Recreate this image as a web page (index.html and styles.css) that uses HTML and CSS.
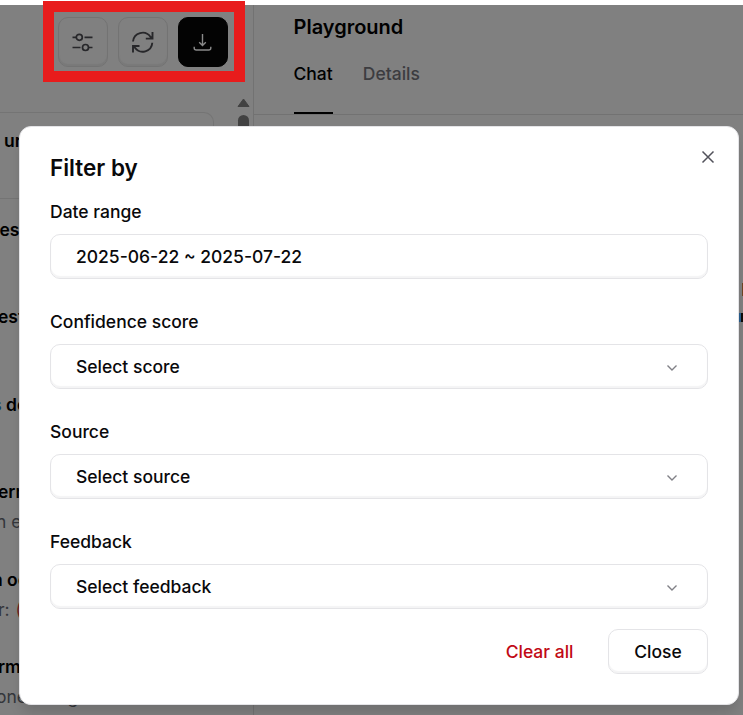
FILE: index.html
```html
<!DOCTYPE html>
<html lang="en">
<head>
<meta charset="utf-8">
<title>Playground</title>
<link rel="stylesheet" href="styles.css">
</head>
<body>
<div class="app">
  <aside class="sidebar">
    <div class="toolbar">
      <button class="tool" aria-label="Filter"><svg width="22" height="22" viewBox="0 0 22 22"><path d="M.5 6.300h3.800M12.500 6.300h8M.5 16.500h8M16.500 16.500h4"/><circle cx="7.300" cy="6.300" r="3"/><circle cx="13.500" cy="16.500" r="3"/></svg></button>
      <button class="tool" aria-label="Refresh"><svg class="refresh" width="22" height="22" viewBox="0 0 22 22"><path d="M1 10.500a9.600 9.600 0 0 1 17.400-4.700L20.300 7.500M20.500 1v6.600h-6.700M20.300 11.800A9.600 9.600 0 0 1 3 16.800L1.200 15M1 21.500V15h6.500"/></svg></button>
      <button class="tool tool-dark" aria-label="Download"><svg width="20" height="20" viewBox="0 0 20 20"><path d="M9.500 2v11.500M6.200 10.300l3.300 3.300 3.300-3.300M1.200 14.800v1.200a2 2 0 0 0 2 2h12.600a2 2 0 0 0 2-2v-1.200"/></svg></button>
    </div>
    <div class="list-area">
      <div class="list">
        <div class="row selected"><b class="first">ur</b></div>
        <div class="row"><b class="in">est</b></div>
        <div class="row"><b>est</b></div>
        <div class="row"><b class="out"><span class="link">s</span> do</b></div>
        <div class="row"><b>ern</b><span class="nudge">n e</span></div>
        <div class="row"><b class="out">n oc</b><span>r: <i class="mark">(</i></span></div>
        <div class="row"><b>rms</b><span class="nudge">one  thing</span></div>
      </div>
      <div class="scrollbar"><svg width="13" height="11" viewBox="0 0 13 11"><path d="M6.500 2 12 9.500H1z"/></svg><div class="thumb"></div></div>
    </div>
  </aside>
  <main class="main">
    <h1>Playground</h1>
    <nav class="tabs"><a class="active">Chat</a><a>Details</a></nav>
    <div class="canvas"><div class="chip chip-orange"></div><div class="chip chip-blue"></div></div>
  </main>
</div>
<div class="highlight"></div>
<section class="modal">
  <button class="dismiss" aria-label="Dismiss"><svg width="14" height="14" viewBox="0 0 14 14"><path d="M1.500 1.500l11 11M12.500 1.500l-11 11"/></svg></button>
  <h2>Filter by</h2>
  <div class="field"><label>Date range</label><div class="control">2025-06-22 ~ 2025-07-22</div></div>
  <div class="field"><label>Confidence score</label><div class="control">Select score<svg width="12" height="8" viewBox="0 0 12 8"><path d="M1.500 1.500 6 6l4.500-4.500"/></svg></div></div>
  <div class="field"><label>Source</label><div class="control">Select source<svg width="12" height="8" viewBox="0 0 12 8"><path d="M1.500 1.500 6 6l4.500-4.500"/></svg></div></div>
  <div class="field"><label>Feedback</label><div class="control">Select feedback<svg width="12" height="8" viewBox="0 0 12 8"><path d="M1.500 1.500 6 6l4.500-4.500"/></svg></div></div>
  <div class="actions"><button class="clear">Clear all</button><button class="close">Close</button></div>
</section>
</body>
</html>
```
FILE: styles.css
```css
* { box-sizing: border-box; }
body {
  margin: 0;
  padding-top: 5px;
  height: 715px;
  overflow: hidden;
  background: #fff;
  color: #09090b;
  font: 500 17.5px/25px Inter, sans-serif;
}
button { font: inherit; padding: 0; background: none; border: 0; }
svg { fill: none; stroke: currentColor; display: block; }
h1, h2 { margin: 0; font-weight: 600; }

.app { display: flex; height: 710px; background: #808080; color: #000; }
.sidebar { width: 254px; flex: none; border-right: 1px solid #727272; display: flex; flex-direction: column; }
.toolbar { display: flex; justify-content: flex-end; gap: 10px; padding: 12px 25px 0 0; height: 92px; }
.tool {
  width: 50px;
  height: 50px;
  display: flex;
  align-items: center;
  justify-content: center;
  border: 1px solid #737373;
  border-radius: 10px;
  box-shadow: inset 0 -2px 1px #797979;
  color: #27272a;
}
.tool svg { stroke-width: 1.7; }
.tool .refresh { stroke-width: 1.9; }
.tool-dark { background: #030303; border-color: #030303; box-shadow: none; color: #8a8a8a; }
.tool-dark svg { stroke-width: 1.4; }

.list-area { display: flex; flex: 1; overflow: hidden; }
.list { width: 214px; margin-top: 15px; }
.row { height: 87.5px; padding-top: 18px; display: flex; flex-direction: column; gap: 5px; margin-left: -2px; white-space: pre; }
.row b { font-weight: 600; }
.row > span { font-weight: 400; color: #34363b; }
.row .first { padding-left: 6px; }
.row .in { margin-left: 1.5px; }
.row .out { margin-left: -6px; }
.row .nudge { margin-left: -2px; }
.selected { height: 86.500px; padding-top: 15px; border: 1px solid #747474; border-width: 1px 1px 1px 0; border-radius: 0 10px 0 0; }
.link { color: #123e66; }
.mark { font-style: normal; color: #6b2020; margin-left: 1px; }
.scrollbar { width: 13px; margin: 0 3px 0 auto; }
.scrollbar svg { fill: #424242; stroke: #424242; stroke-linejoin: round; }
.thumb { width: 11px; height: 160px; margin: 7px auto 0; border-radius: 6px; background: #424242; }

.main { flex: 1; padding-top: 8px; display: flex; flex-direction: column; }
.main h1 { padding-left: 39.500px; font-size: 20px; line-height: 28px; }
.tabs { display: flex; gap: 30px; height: 74px; padding: 16px 0 0 39.500px; border-bottom: 1px solid #727272; }
.tabs a { height: 57px; padding-top: 4px; color: #3c3c40; }
.tabs .active { color: #000; border-bottom: 2px solid #000; }
.canvas { flex: 1; display: flex; flex-direction: column; align-items: flex-end; padding-top: 168px; }
.chip-orange { width: 1px; height: 13px; background: #704522; }
.chip-blue { width: 4px; height: 9px; margin-top: 17px; background: linear-gradient(90deg, #285f8e 2px, #100b08 2px); }

.highlight { position: absolute; left: 43px; top: 1px; width: 202px; height: 81px; border: 11px solid #e81c1c; }

.modal {
  position: absolute;
  left: 19px;
  top: 126px;
  width: 720px;
  height: 579px;
  padding: 26px 31px 0;
  background: #fff;
  border: 1px solid #e4e4e7;
  border-radius: 12px;
  box-shadow: 0 10px 14px -3px rgba(0, 0, 0, .14);
}
.modal h2 { font-size: 22.5px; line-height: 30px; margin: 0 0 16px -1px; }
.dismiss { position: absolute; right: 23px; top: 23px; color: #52525b; }
.dismiss svg { stroke-width: 1.5; }
.field { height: 110px; margin: 0 -1px; }
.field label { display: block; height: 35px; }
.control, .close { border: 1px solid #e4e4e7; border-radius: 10px; box-shadow: inset 0 -2px 1px #f4f4f5; }
.control { height: 45px; padding: 0 29px 1px 25px; display: flex; align-items: center; justify-content: space-between; }
.control svg { color: #808086; stroke-width: 1.4; margin-top: 3px; }
.actions { display: flex; justify-content: flex-end; gap: 34.500px; margin: -10px -1px 0; }
.close { width: 100px; height: 45px; padding-bottom: 1px; color: #09090b; }
.clear { color: #c10a16; padding-bottom: 1px; }
```
